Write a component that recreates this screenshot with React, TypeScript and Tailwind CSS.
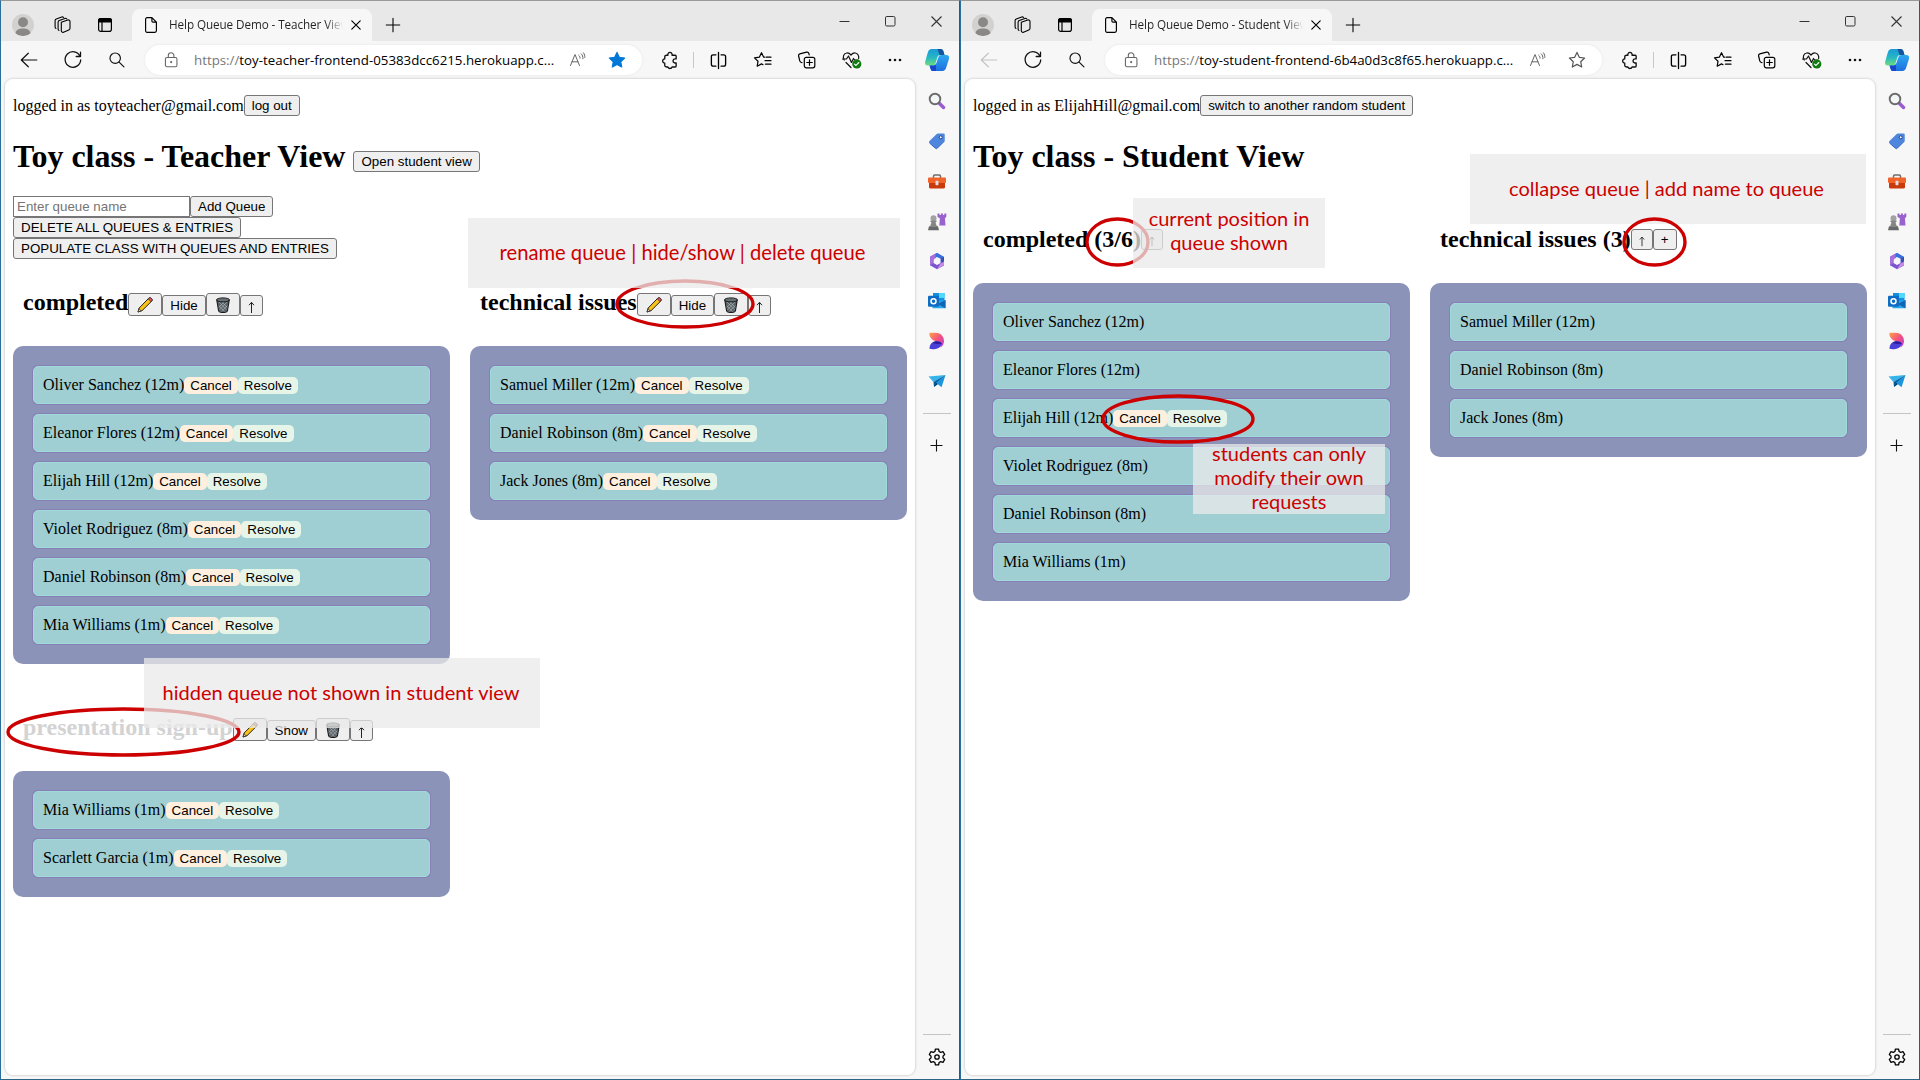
import React from "react";

type IconProps = { children: React.ReactNode; size?: number; className?: string; sw?: number };

function Icon({ children, size = 20, className = "", sw = 1.2 }: IconProps) {
  return (
    <svg
      width={size}
      height={size}
      viewBox="0 0 20 20"
      fill="none"
      stroke="currentColor"
      strokeWidth={sw}
      strokeLinecap="round"
      strokeLinejoin="round"
      className={"block shrink-0 " + className}
    >
      {children}
    </svg>
  );
}

const starPath = "M10 2.4l2.3 4.9 5.3.7-3.9 3.7 1 5.3L10 14.400l-4.700 2.600 1-5.300L2.400 8l5.300-.7z";

function Avatar() {
  return (
    <svg width="22" height="22" viewBox="0 0 22 22" className="block shrink-0">
      <circle cx="11" cy="11" r="11" fill="#d3d1cf" />
      <circle cx="11" cy="8.300" r="5" fill="#8a8886" />
      <path d="M3.500 19.200c.6-3.300 3.500-4.700 7.500-4.700s6.900 1.400 7.500 4.700A11 11 0 0 1 11 22a11 11 0 0 1-7.500-2.800z" fill="#8a8886" />
    </svg>
  );
}

function Workspaces() {
  return (
    <Icon size={20} sw={1.1}>
      <path d="M8.300 7.300l6.500-2.300c1-.3 2.200.3 2.200 1.500v6.800c0 .8-.5 1.300-1.200 1.600l-5.300 2.300c-1 .4-2.200-.2-2.200-1.400z" />
      <path d="M6 15.400c-.6-.2-.9-.7-.9-1.400V7.200c0-.8.500-1.300 1.200-1.600l5.600-2.200c.7-.2 1.500 0 1.900.6" />
      <path d="M3 13.400c-.6-.2-.9-.7-.9-1.400V5.500c0-.8.500-1.300 1.200-1.600L8.700 2c.7-.2 1.400 0 1.800.5" />
    </Icon>
  );
}

function TabActions() {
  return (
    <svg width="16" height="16" viewBox="0 0 16 16" className="block shrink-0">
      <rect x="1.600" y="1.600" width="12.800" height="12.800" rx="2.200" fill="none" stroke="#000" strokeWidth="1.200" />
      <path d="M1 5.500V3.500A2.500 2.500 0 0 1 3.500 1h9A2.500 2.500 0 0 1 15 3.500v2z" fill="#000" />
      <path d="M5 5v9.500" stroke="#000" strokeWidth="1.200" />
    </svg>
  );
}

function Copilot() {
  return (
    <svg width="26" height="24" viewBox="0 0 26 24" className="block shrink-0">
      <defs>
        <linearGradient id="cpA" x1="0" y1="0" x2="0" y2="1">
          <stop offset="0" stopColor="#1a9ad8" />
          <stop offset=".5" stopColor="#24b6c4" />
          <stop offset="1" stopColor="#6fdc7c" />
        </linearGradient>
        <linearGradient id="cpB" x1="0" y1="0" x2="0" y2="1">
          <stop offset="0" stopColor="#2ea8f0" />
          <stop offset="1" stopColor="#1e6fe0" />
        </linearGradient>
      </defs>
      <path d="M7.500 1h9c1.800 0 2.600 1 3 2.600L20.500 7h-4c-2 0-2.800 1-3.400 3l-1.400 5c-.5 1.700-1.300 2.500-3 2.500H3.800C1.500 17.500.6 16 1.200 13.500l2.600-9C4.500 2.200 5.500 1 7.500 1z" fill="url(#cpA)" />
      <path d="M13.500 1h3c1.800 0 2.600 1 3 2.600L20.500 7h-5z" fill="#15559c" />
      <path d="M18.500 23h-9c-1.800 0-2.600-1-3-2.600L5.500 17.500h3.700c2 0 2.800-1 3.400-3l1.700-5c.5-1.700 1.300-2.500 3-2.500h5c2.300 0 3.200 1.500 2.600 4l-2.700 8.500C21.500 21.800 20.500 23 18.500 23z" fill="url(#cpB)" />
      <path d="M12 23H9.500c-1.800 0-2.600-1-3-2.600l-1-2.900h3.700c1.300 0 2.100-.4 2.700-1.300z" fill="#1846c8" />
    </svg>
  );
}

function SideSearch() {
  return (
    <svg width="18" height="18" viewBox="0 0 18 18" className="block">
      <path d="M11.500 11.500l4 4" stroke="#9a5bd2" strokeWidth="3.400" strokeLinecap="round" />
      <circle cx="7" cy="7" r="5.300" fill="#f4f6f8" stroke="#6b6b6b" strokeWidth="1.900" />
    </svg>
  );
}
function SideTag() {
  return (
    <svg width="18" height="18" viewBox="0 0 18 18" className="block">
      <path d="M10 1.500l5.700.1c.6 0 1 .4 1 1l.1 5.400c0 .5-.2.900-.5 1.200l-7 7c-.6.6-1.300.6-1.900 0L1.500 11c-.6-.6-.6-1.300 0-1.900L8.700 2c.4-.3.800-.5 1.300-.5z" fill="#4f86dd" />
      <path d="M1.500 11l5.900 5.200c.6.6 1.300.6 1.900 0l7-7" fill="none" stroke="#3567c0" />
      <circle cx="12.700" cy="5.300" r="1.500" fill="#fff" stroke="#1c3f82" strokeWidth="1" />
    </svg>
  );
}
function SideToolbox() {
  return (
    <svg width="18" height="18" viewBox="0 -1 18 18" className="block">
      <path d="M5.500 5V3.300c0-.8.500-1.300 1.300-1.300h4.400c.8 0 1.300.5 1.300 1.300V5" fill="none" stroke="#6d6d6d" strokeWidth="1.500" />
      <rect x="0" y="4.500" width="18" height="5.500" rx="1" fill="#f0642c" />
      <path d="M1 10h16v4.300c0 .7-.5 1.200-1.200 1.200H2.200c-.7 0-1.200-.5-1.200-1.200z" fill="#c93a0d" />
      <rect x="7.500" y="7.800" width="3" height="4.400" rx=".8" fill="#dedede" />
    </svg>
  );
}
function SideChess() {
  return (
    <svg width="20" height="20" viewBox="0 -1 20 20" className="block">
      <path d="M10.500 1.500h2V3h1.400V1.500h2V3h1.400V1.500h2V5l-1.400 1.300.6 7.200h-6.200l.6-7.200L10.500 5z" fill="#9a62cc" />
      <circle cx="6.500" cy="6.200" r="3" fill="#a2a2a2" />
      <path d="M3.500 8.500h6v1.600H8.700c0 1.800.4 3 1.500 4.200H2.800c1.100-1.200 1.500-2.400 1.500-4.200h-.8z" fill="#858585" />
      <path d="M2 14.300h9l1 3.900H1z" fill="#686868" />
    </svg>
  );
}
function SideM365() {
  return (
    <svg width="18" height="18" viewBox="0 0 18 18" className="block">
      <path d="M9 .8L16 4.800V9l-3.600-2.200L9 5 5.500 7V13L2 11.500V4.800z" fill="#3672d8" />
      <path d="M16 4.800v8.400l-3.500 2V7z" fill="#3d4fb5" />
      <path d="M2 4.800L7.500 1.500V8L5.500 9v4.500L2 13.200z" fill="#a56fdc" />
      <path d="M2 13.200L9 17.200l7-4V9l-3.500 2L9 13l-3.500-2z" fill="#7b55cf" />
      <path d="M9 17.200l7-4V10l-3.500 1.200z" fill="#c58be8" />
      <path d="M9 5.400l3.200 1.800v3.600L9 12.600 5.800 10.800V7.200z" fill="#f7f7f7" />
    </svg>
  );
}
function SideOutlook() {
  return (
    <svg width="18" height="18" viewBox="0 0 18 18" className="block">
      <rect x="5" y="1" width="11.500" height="11" fill="#1490df" />
      <rect x="11" y="1" width="5.500" height="5" fill="#50d9ff" />
      <rect x="5" y="6" width="6" height="6" fill="#0f63b5" />
      <path d="M4.500 9.500L17.500 8v8.200H4.500z" fill="#28a8ea" />
      <path d="M17.500 8v8.200L9.500 12z" fill="#1066b5" />
      <rect x="0" y="3.800" width="11" height="11" rx="1" fill="#0f6cc4" />
      <circle cx="5.500" cy="9.300" r="2.500" fill="none" stroke="#fff" strokeWidth="1.500" />
    </svg>
  );
}
function SideDesigner() {
  return (
    <svg width="18" height="18" viewBox="0 0 18 18" className="block">
      <defs>
        <linearGradient id="dsA" x1="0" y1="0" x2="1" y2="1">
          <stop offset="0" stopColor="#ffa24a" />
          <stop offset=".5" stopColor="#f5517c" />
          <stop offset="1" stopColor="#b03be8" />
        </linearGradient>
      </defs>
      <path d="M1.500.8h5.800c5 0 8.700 3.500 8.700 8.200 0 3-1.500 5.200-3.500 6.500C13 9.500 7 10 4 7.300 2 5.700 1 3 1.500.8z" fill="url(#dsA)" />
      <path d="M1.500 16.800c0-4.800 2.800-7.600 7-7.600 2.200 0 4.300.8 5.500 2.300-1 3.500-4.300 5.700-8 5.700-2 0-3.500 0-4.500-.4z" fill="#4a3fd6" />
      <path d="M4.500 10.800c2.500-2.200 7-2 9.500.7-2 .8-6 1-9.500-.7z" fill="#2c1f9c" />
    </svg>
  );
}
function SidePlane() {
  return (
    <svg width="18" height="18" viewBox="0 0 18 18" className="block">
      <path d="M.5 4.500L17.500 3l-12 7z" fill="#35b4ea" />
      <path d="M17.500 3l-12 7 .5 5z" fill="#0c5a9c" />
      <path d="M17.500 3L8 10.800l5.500 4.500z" fill="#1b95dc" />
      <path d="M8 10.800L6 15l3.800-2.700z" fill="#0b3f70" />
    </svg>
  );
}

function Pencil() {
  return (
    <svg width="16" height="16" viewBox="0 0 16 16" className="block">
      <path d="M1 15l1.200-4L11.800 1.200c.9-.8 2.200-.2 2.800.4s.8 1.700.2 2.400L5 13.700z" fill="#fbc21a" stroke="#222" strokeWidth="1" strokeLinejoin="round" />
      <path d="M11.300 1.800l.8-.7c.8-.6 1.900-.1 2.500.5s.8 1.500.2 2.200l-.9.900z" fill="#e8536b" stroke="#222" strokeWidth=".7" />
      <path d="M1 15l1-3.300 2.200 2.200z" fill="#f2d5a8" stroke="#222" strokeWidth=".7" />
    </svg>
  );
}
function Trash() {
  return (
    <svg width="16" height="16" viewBox="0 0 16 16" className="block">
      <path d="M1.800 3.200L3.600 14c.2 1 2.200 1.500 4.400 1.500s4.200-.5 4.400-1.500l1.800-10.800z" fill="#596064" stroke="#1b1b1b" strokeWidth="1.100" />
      <path d="M4 5l7.600 8M6.500 4.500l5.800 6M3.700 8.500l6 6M12 5l-7.600 8M9.500 4.500l-5.800 6M12.300 8.500l-6 6" stroke="#b4c0c8" strokeWidth=".6" />
      <ellipse cx="8" cy="2.900" rx="6.500" ry="2" fill="#666f74" stroke="#1b1b1b" strokeWidth="1" />
    </svg>
  );
}

type BtnProps = { children: React.ReactNode; className?: string };
function Btn({ children, className = "" }: BtnProps) {
  return (
    <button
      className={
        "flex h-[21px] shrink-0 items-center justify-center rounded-[3px] border border-[#767676] bg-[#efefef] px-[7px] font-['Liberation_Sans',Arial,sans-serif] text-[13.333px] leading-[15px] whitespace-nowrap text-black " +
        className
      }
    >
      {children}
    </button>
  );
}

function Arrow() {
  return (
    <svg width="7" height="13" viewBox="0 0 7 13" className="mt-[3px] block" fill="none" stroke="#222" strokeWidth="1">
      <path d="M3.500 12V1.500M1 4.200l2.500-2.900L6 4.200" />
    </svg>
  );
}

type Entry = { name: string; own?: boolean };

function Queue({
  title,
  entries,
  teacher,
  toggle,
  hidden,
  canAdd,
}: {
  title: string;
  entries: Entry[];
  teacher?: boolean;
  toggle?: string;
  hidden?: boolean;
  canAdd?: boolean;
}) {
  return (
    <section className="w-[437px]">
      <div className="flex h-[87px] items-start pl-2.5">
        <h2 className={"mt-[30px] text-2xl leading-[27px] font-bold whitespace-nowrap " + (hidden ? "text-[#d3d3d3]" : "text-black")}>{title}</h2>
        {teacher ? (
          <div className="mt-[34px] flex h-[23px] items-end">
            <Btn className="h-[23px] w-[34px]">
              <Pencil />
            </Btn>
            <Btn>{toggle}</Btn>
            <Btn className="h-[23px] w-[34px]">
              <Trash />
            </Btn>
            <Btn className="w-[23px]">
              <Arrow />
            </Btn>
          </div>
        ) : (
          <div className="mt-[33px] flex">
            <Btn className="w-[22px]">
              <Arrow />
            </Btn>
            {canAdd && <Btn className="w-6">+</Btn>}
          </div>
        )}
      </div>
      <ul className="flex flex-col gap-2.5 rounded-[10px] bg-[#8c93b9] p-5">
        {entries.map((e) => (
          <li key={e.name} className="flex h-[38px] items-baseline rounded-[5px] border border-[#a0dadb] bg-[#a0cfd3] px-[9px] pt-[9px] text-base leading-[18px] shadow-[0_0_0_1px_#877fb6]">
            <span>{e.name}</span>
            {(teacher || e.own) && (
              <span className="flex font-['Liberation_Sans',Arial,sans-serif] text-[13.333px] leading-[17px]">
                <button className="rounded-[5px] bg-[#ffefde] px-1.5">Cancel</button>
                <button className="rounded-[5px] bg-[#e7f5e9] px-1.5">Resolve</button>
              </span>
            )}
          </li>
        ))}
      </ul>
    </section>
  );
}

function Slot({ children, className = "" }: { children?: React.ReactNode; className?: string }) {
  return <div className={"flex shrink-0 items-center justify-center " + className}>{children}</div>;
}

function BrowserWindow({
  title,
  host,
  canGoBack,
  starred,
  children,
}: {
  title: string;
  host: string;
  canGoBack: boolean;
  starred: boolean;
  children: React.ReactNode;
}) {
  return (
    <div className="flex h-[1080px] w-[960px] flex-col border border-t-[#999] border-r-[#235d85] border-b-[#2a6585] border-l-[#2a6f9c] bg-[#f7f7f7] text-black">
      <div className="flex h-10 shrink-0 bg-[#e8e8e8]">
        <Slot className="ml-[11px] h-full w-[22px] pt-2">
          <Avatar />
        </Slot>
        <Slot className="ml-[18px] w-[22px] pt-2">
          <Workspaces />
        </Slot>
        <Slot className="ml-[22px] w-[18px] pt-2">
          <TabActions />
        </Slot>
        <div className="mt-2 ml-[18px] flex h-8 w-[240px] items-center rounded-t-lg bg-[#f7f7f7] pl-2.5 font-['Open_Sans','Noto_Sans',sans-serif]">
          <Icon size={18} sw={1.300}>
            <path d="M4 3.500C4 2.500 4.700 1.800 5.700 1.800H11l5 5v9.700c0 1-.7 1.700-1.700 1.700H5.700c-1 0-1.700-.7-1.700-1.700zM11 1.800v3.700c0 .8.500 1.300 1.300 1.300H16" />
          </Icon>
          <span className="ml-[9px] w-[174px] bg-gradient-to-r from-[#222] from-90% to-transparent bg-clip-text text-[11.700px] tracking-[-0.080px] whitespace-nowrap text-transparent">
            {title}
          </span>
          <Icon size={14} sw={1.700} className="ml-[6px]">
            <path d="M4 4l12 12M16 4L4 16" />
          </Icon>
        </div>
        <Slot className="ml-[12px] w-[18px] pt-2">
          <Icon size={18}>
            <path d="M10 2.500v15M2.500 10h15" />
          </Icon>
        </Slot>
        <div className="ml-auto flex h-10 text-[#333]">
          <Slot className="w-[46px]">
            <svg width="11" height="11" viewBox="0 0 11 11" className="block">
              <path d="M.5 5.500h10" stroke="currentColor" />
            </svg>
          </Slot>
          <Slot className="w-[46px]">
            <svg width="11" height="11" viewBox="0 0 11 11" className="block">
              <rect x=".5" y=".5" width="9.500" height="9.500" rx="1.300" fill="none" stroke="currentColor" />
            </svg>
          </Slot>
          <Slot className="w-[46px]">
            <svg width="11" height="11" viewBox="0 0 11 11" className="block">
              <path d="M.5.5l10 10M10.500.5l-10 10" stroke="currentColor" strokeWidth="1.100" />
            </svg>
          </Slot>
        </div>
      </div>

      <div className="flex h-[38px] shrink-0 items-center">
        <Slot className={"ml-[6px] w-11 " + (canGoBack ? "text-[#111]" : "text-[#c4c4c4]")}>
          <Icon size={20}>
            <path d="M17.800 10H2.500M9.300 3.200L2.300 10l7 6.800" />
          </Icon>
        </Slot>
        <Slot className="w-11 text-[#111]">
          <Icon size={20} sw={1.300}>
            <path d="M17 6.200A7.800 7.800 0 1 0 17.700 10M17.500 2.200v4.300h-4.300" />
          </Icon>
        </Slot>
        <Slot className="w-11 text-[#111]">
          <Icon size={18} sw={1.300}>
            <circle cx="8" cy="8" r="5.800" />
            <path d="M12.300 12.300l5.400 5.400" />
          </Icon>
        </Slot>
        <div className="ml-[6px] flex h-[30px] w-[497px] items-center rounded-full bg-white font-['Open_Sans','Noto_Sans',sans-serif] shadow-[0_0_3px_rgba(0,0,0,0.08)]">
          <Icon size={18} className="ml-[17px] text-[#666]">
            <rect x="3.800" y="7.200" width="12.800" height="10.300" rx="1.800" />
            <path d="M7 7V5a3.100 3.100 0 0 1 6.200 0v2" />
            <circle cx="10.200" cy="12.300" r=".6" fill="currentColor" />
          </Icon>
          <span className="ml-[14px] w-[364px] pt-px text-[13.300px] whitespace-nowrap">
            <span className="text-[#777]">https://</span>
            {host}
          </span>
          <svg width="18" height="16" viewBox="0 0 18 16" fill="none" stroke="#666" strokeWidth="1" strokeLinecap="round" className="ml-[11px] block">
            <path d="M1.500 13.500L6 2.500l4.500 11M3 9.800h6M9.800 3.300c.9.700 1.300 1.700 1.200 2.900M12.200 1.800c1.300 1.200 2 3 1.700 5M14.500.8c1 1.400 1.500 3.200 1.300 4.700" />
          </svg>
          <Icon size={20} className={"ml-[20px] " + (starred ? "text-[#0078d7]" : "text-[#555]")}>
            <path d={starPath} fill={starred ? "currentColor" : "none"} />
          </Icon>
        </div>
        <Slot className="ml-[16px] w-[22px] text-[#111]">
          <Icon size={19} sw={1.400}>
            <path d="M7 4.500h1.300a2.300 2.300 0 1 1 4.400 0H16c.7 0 1 .4 1 1v2.800h-.6a2.200 2.200 0 1 0 0 4.300h.6v3.200c0 .7-.4 1-1 1h-3.300a2.300 2.300 0 0 1-4.400 0H7c-1.300 0-2-.6-2-1.500v-2.600a2.200 2.200 0 1 1 0-4.400V6c0-1 .7-1.500 2-1.500z" />
          </Icon>
        </Slot>
        <div className="ml-[13px] h-4 w-px bg-[#c8c8c8]" />
        <Slot className="ml-[13px] w-[22px]">
          <Icon size={19} sw={1.400}>
            <path d="M7.300 4H4.500C3.200 4 2.500 4.700 2.500 6v8c0 1.300.7 2 2 2h2.800M12.700 4h2.800c1.300 0 2 .7 2 2v8c0 1.300-.7 2-2 2h-2.800M10 1.500v17" />
          </Icon>
        </Slot>
        <Slot className="ml-[23px] w-[22px]">
          <Icon size={20} sw={1.200}>
            <path d="M11.500 7.200h-.8L8.500 2.700 6.300 7.200l-4.800.7 3.500 3.400-.8 4.900 4.300-2.300 1.500.8M13 7.200h5M12 10.700h6M12.500 14.200H18" />
          </Icon>
        </Slot>
        <Slot className="ml-[22px] w-[22px]">
          <Icon size={20} sw={1.200}>
            <rect x="7.300" y="7.300" width="10.500" height="10.500" rx="2" />
            <path d="M12.500 9.800v5.500M9.800 12.500h5.500M5 12.700l-.7-.2c-.8-.2-1.300-.9-1.500-1.600L1.600 6c-.2-1 .3-1.800 1.200-2.100l6.800-1.800c1-.2 1.900.2 2.200 1.200l.4 1.500" />
          </Icon>
        </Slot>
        <Slot className="ml-[23px] w-[22px]">
          <svg width="22" height="20" viewBox="0 0 22 20" fill="none" stroke="#111" strokeWidth="1.200" strokeLinecap="round" strokeLinejoin="round" className="block">
            <path d="M3.200 10C1.500 7.500 2.300 3.300 5.700 3c1.900-.2 3.300.8 4.300 2 1-1.200 2.400-2.200 4.300-2 2.600.3 3.900 3 3.300 5.500M5 12.500l5 5" />
            <path d="M1.500 9h4l2-3 3 6.500 2-4 1.200 1.500h3.500" />
            <circle cx="15.800" cy="14" r="4.600" fill="#107c10" stroke="none" />
            <path d="M13.500 14.200l1.500 1.300M15.500 14.800l2.300-2.300" stroke="#fff" strokeWidth="1.100" />
          </svg>
        </Slot>
        <Slot className="ml-[21px] w-[22px]">
          <svg width="14" height="4" viewBox="0 0 14 4" className="block" fill="#111">
            <circle cx="2" cy="2" r="1.300" />
            <circle cx="7" cy="2" r="1.300" />
            <circle cx="12" cy="2" r="1.300" />
          </svg>
        </Slot>
        <Slot className="ml-[18px] w-[26px]">
          <Copilot />
        </Slot>
      </div>

      <div className="flex min-h-0 flex-1">
        <main className="mb-1 ml-1 w-[910px] rounded-lg bg-white px-2 font-['Liberation_Serif','Times_New_Roman',serif] shadow-[0_0_2px_1px_rgba(0,0,0,0.12)]">
          {children}
        </main>
        <aside className="flex flex-1 flex-col items-center pt-[2px]">
          <Slot className="h-10"><SideSearch /></Slot>
          <Slot className="h-10"><SideTag /></Slot>
          <Slot className="h-10"><SideToolbox /></Slot>
          <Slot className="h-10"><SideChess /></Slot>
          <Slot className="h-10"><SideM365 /></Slot>
          <Slot className="h-10"><SideOutlook /></Slot>
          <Slot className="h-10"><SideDesigner /></Slot>
          <Slot className="h-10"><SidePlane /></Slot>
          <div className="mt-3 h-px w-7 bg-[#c4c4c4]" />
          <Slot className="mt-[21px] h-5 pr-px">
            <svg width="13" height="13" viewBox="0 0 13 13" className="block">
              <path d="M6.500.5v12M.5 6.500h12" stroke="#111" strokeWidth="1.100" />
            </svg>
          </Slot>
          <div className="mt-auto h-px w-7 bg-[#c4c4c4]" />
          <Slot className="mt-[12px] mb-[12px] h-5">
            <Icon size={20} sw={1.300}>
              <path d="M8.400 2.200h3.200l.5 2.300 1.600.9 2.300-.7 1.700 2.800-1.700 1.600v1.800l1.700 1.600-1.700 2.800-2.300-.7-1.600.9-.5 2.300H8.400l-.5-2.300-1.600-.9-2.300.7-1.700-2.800L4 10.900V9.100L2.300 7.500 4 4.700l2.300.7 1.600-.9z" />
              <circle cx="10" cy="10" r="2.200" />
            </Icon>
          </Slot>
        </aside>
      </div>
    </div>
  );
}

function Note({ className, children }: { className: string; children: React.ReactNode }) {
  return (
    <div
      className={
        "absolute flex h-[70px] items-center justify-center bg-[#eaeaea]/75 text-center font-['Lato',sans-serif] leading-6 whitespace-nowrap text-[#cc0000] " +
        className
      }
    >
      {children}
    </div>
  );
}

function Ring({ className, w }: { className: string; w: number }) {
  return (
    <svg width={w} height={50} className={"absolute " + className}>
      <ellipse cx={w / 2} cy={25} rx={w / 2 - 2} ry={23} fill="none" stroke="#cc0000" strokeWidth={3.4} />
    </svg>
  );
}

const completed: Entry[] = [
  { name: "Oliver Sanchez (12m)" },
  { name: "Eleanor Flores (12m)" },
  { name: "Elijah Hill (12m)", own: true },
  { name: "Violet Rodriguez (8m)" },
  { name: "Daniel Robinson (8m)" },
  { name: "Mia Williams (1m)" },
];
const technical: Entry[] = [{ name: "Samuel Miller (12m)" }, { name: "Daniel Robinson (8m)" }, { name: "Jack Jones (8m)" }];
const presentation: Entry[] = [{ name: "Mia Williams (1m)" }, { name: "Scarlett Garcia (1m)" }];

export default function App() {
  return (
    <div className="relative flex h-[1080px] w-[1920px] overflow-hidden">
      <BrowserWindow
        title="Help Queue Demo - Teacher View"
        host="toy-teacher-frontend-05383dcc6215.herokuapp.c..."
        canGoBack
        starred
      >
        <div className="flex pt-4 text-base leading-[21px]">
          <span>logged in as toyteacher@gmail.com</span>
          <Btn>log out</Btn>
        </div>
        <div className="mt-[22px] flex h-[36px] items-start gap-2">
          <h1 className="text-[32px] leading-[37px] font-bold">Toy class - Teacher View</h1>
          <Btn className="mt-[13px]">Open student view</Btn>
        </div>
        <div className="mt-[22px] flex">
          <input
            placeholder="Enter queue name"
            className="h-[21px] w-[177px] border border-[#767676] bg-white px-[3px] font-['Liberation_Sans',Arial,sans-serif] text-[13.333px] placeholder:text-[#757575]"
          />
          <Btn>Add Queue</Btn>
        </div>
        <div className="flex flex-col items-start">
          <Btn>DELETE ALL QUEUES &amp; ENTRIES</Btn>
          <Btn>POPULATE CLASS WITH QUEUES AND ENTRIES</Btn>
        </div>
        <div className="flex flex-wrap gap-5">
          <Queue title="completed" entries={completed} teacher toggle="Hide" />
          <Queue title="technical issues" entries={technical} teacher toggle="Hide" />
          <Queue title="presentation sign-up" entries={presentation} teacher toggle="Show" hidden />
        </div>
      </BrowserWindow>

      <BrowserWindow
        title="Help Queue Demo - Student View"
        host="toy-student-frontend-6b4a0d3c8f65.herokuapp.c..."
        canGoBack={false}
        starred={false}
      >
        <div className="flex pt-4 text-base leading-[21px]">
          <span>logged in as ElijahHill@gmail.com</span>
          <Btn>switch to another random student</Btn>
        </div>
        <h1 className="mt-[22px] mb-[21px] text-[32px] leading-[37px] font-bold">Toy class - Student View</h1>
        <div className="flex gap-5">
          <Queue title="completed (3/6)" entries={completed} />
          <Queue title="technical issues (3)" entries={technical} canAdd />
        </div>
      </BrowserWindow>

      <Ring w={140} className="top-[279px] left-[615px]" />
      <Ring w={235} className="top-[707px] left-[6px]" />
      <Ring w={65} className="top-[217px] left-[1085px]" />
      <Ring w={154} className="top-[394px] left-[1101px]" />
      <Note className="top-[218px] left-[468px] w-[432px] pr-[3px] pb-[2px] text-[20.200px]">rename queue | hide/show | delete queue</Note>
      <Note className="top-[658px] left-[144px] w-[396px] pr-[2px] pb-[2px] text-[20.050px]">hidden queue not shown in student view</Note>
      <Note className="top-[198px] left-[1133px] w-[192px] pb-[6px] text-[20px]">
        current position in
        <br />
        queue shown
      </Note>
      <Note className="top-[444px] left-[1193px] w-[192px] pb-[4px] text-[20px]">
        students can only
        <br />
        modify their own
        <br />
        requests
      </Note>
      <Note className="top-[154px] left-[1470px] w-[396px] pr-[3px] pb-[2px] text-[20.050px]">collapse queue | add name to queue</Note>
      <Ring w={65} className="top-[217px] left-[1622px]" />
    </div>
  );
}
